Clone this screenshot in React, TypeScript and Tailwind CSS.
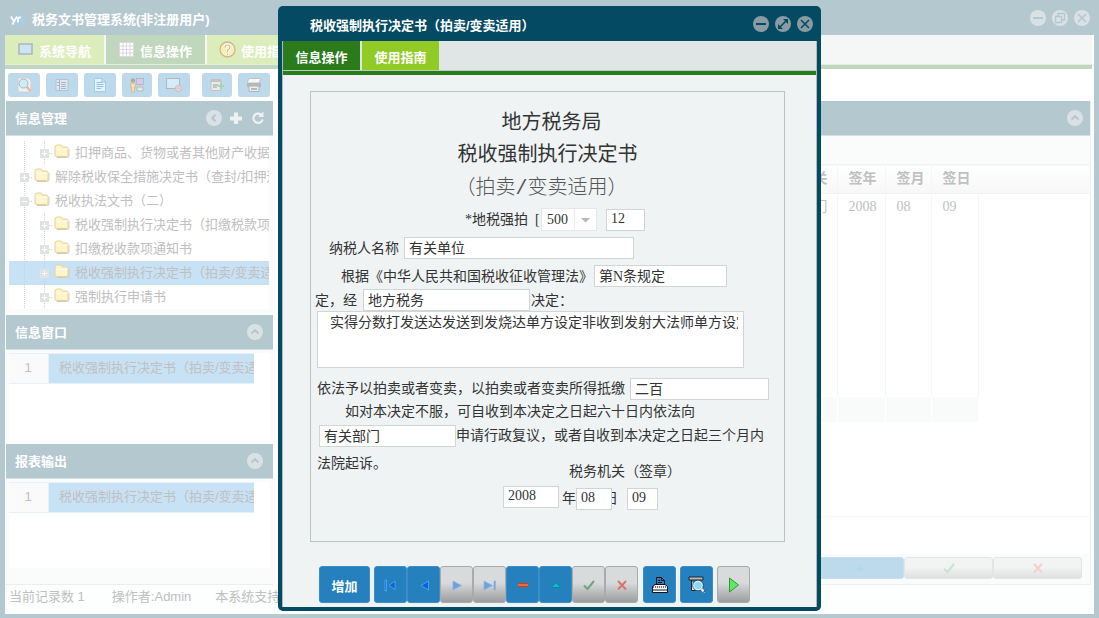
import { useState, type ReactNode } from 'react';
import clsx from 'clsx';

const treeRows = [
  { level: 2, text: '扣押商品、货物或者其他财产收据' },
  { level: 1, text: '解除税收保全措施决定书（查封/扣押适' },
  { level: 1, text: '税收执法文书（二）', open: true },
  { level: 2, text: '税收强制执行决定书（扣缴税款项' },
  { level: 2, text: '扣缴税收款项通知书' },
  { level: 2, text: '税收强制执行决定书（拍卖/变卖适', selected: true },
  { level: 2, text: '强制执行申请书' },
];

const folderPath = 'M1 4.5 Q1 2 3 2 H6.5 Q8 2 8.5 4 H12.5 Q14 4 14 5.5 V12 Q14 13.5 12.5 13.5 H3 Q1 13.5 1 12 Z';

function TreeLines({ level, open }: { level: number; open?: boolean }) {
  const x = level === 2 ? 35 : 15;
  return (
    <svg width={level === 2 ? 66 : 46} height="24" className="shrink-0" fill="none">
      <path d="M15.5 0V24" stroke="#d2d2d2" strokeDasharray="1 1" />
      {level === 2 && <path d="M35.5 0V24" stroke="#d2d2d2" strokeDasharray="1 1" />}
      <path d={`M${x + 5} 12.5H${x + 9}`} stroke="#d2d2d2" strokeDasharray="1 1" />
      <rect x={x - 4} y="8" width="9" height="9" fill="#e0e3e4" />
      <path d={`M${x - 2} 12.5h5${open ? '' : `M${x + 0.5} 10v5`}`} stroke="#fff" />
      <g transform={`translate(${x + 10} 2)`}>
        <path d={folderPath} fill="#fdf5cb" stroke="#e8d29c" />
        <path d="M3 6.5H13.5" stroke="#fffdf0" />
        <path d="M15 6V13.5Q14.5 14.5 12.5 14.5H3" stroke="#d3cbb8" />
      </g>
    </svg>
  );
}

function CircleButton({ label, dark, children }: { label: string; dark?: boolean; children: ReactNode }) {
  return (
    <button
      aria-label={label}
      className={clsx(
        'w-4 h-4 rounded-full flex items-center justify-center shrink-0',
        dark ? 'bg-[#8a9ca3] text-[#044a62]' : 'bg-[#dae1e4] text-[#b4c8d0]'
      )}
    >
      <svg width="16" height="16" viewBox="0 0 16 16" fill="none" stroke="currentColor" strokeWidth="1.6">
        {children}
      </svg>
    </button>
  );
}

function PanelHeader({ title, children }: { title?: string; children: ReactNode }) {
  return (
    <div className="h-[35px] shrink-0 bg-[#b4c8d0] border-b border-[#d5e0e5] flex items-center justify-between pl-[9px] pr-[7px]">
      <h2 className="text-white font-bold pt-px">{title}</h2>
      <div className="flex items-center gap-[7px]">{children}</div>
    </div>
  );
}

const upArrow = <path d="M4.5 9.5 8 6.2 11.5 9.5" strokeWidth="2" />;

function ListPanel({ title, className }: { title: string; className: string }) {
  return (
    <section className={clsx('flex flex-col', className)}>
      <PanelHeader title={title}>
        <span className="pr-[3px]">
          <CircleButton label="折叠">{upArrow}</CircleButton>
        </span>
      </PanelHeader>
      <div className="flex-1 mx-[3px] mt-[3px] mb-1 bg-white">
        <div className="flex h-[31px] mr-4 border-y border-[#e6f1fa]">
          <span className="w-10 pr-px text-center leading-[28px] bg-[#fafafa] border-r border-[#e6f1fa]">1</span>
          <span className="flex-1 bg-[#c8e2f5] pl-[10px] leading-[28px] whitespace-nowrap overflow-hidden">
            税收强制执行决定书（拍卖/变卖适
          </span>
        </div>
      </div>
    </section>
  );
}

const toolIcons = [
  {
    label: '查询',
    wide: true,
    icon: (
      <>
        <path d="M2 1H12L15 4V15H2Z" fill="#efefef" stroke="#cfd0d0" />
        <circle cx="7.5" cy="6.5" r="4.5" fill="#cdecfa" stroke="#a9b9c3" />
        <path d="M10.5 9.5 14.5 14" stroke="#e8b79f" strokeWidth="2.4" />
      </>
    ),
  },
  {
    label: '列表',
    wide: true,
    icon: (
      <>
        <path d="M2 2.5H14V13.5H2Z" fill="#dfe8ee" stroke="#b5c3ce" />
        <path d="M5.5 3V13M7 5.5H12M7 7.5H12M7 9.5H12M7 11.5H12M3 5.5H5M3 8.5H5" stroke="#a3b7c6" />
      </>
    ),
  },
  {
    label: '文档',
    wide: true,
    icon: (
      <>
        <path d="M2.5 1.5H10L13.5 5V14.5H2.5Z" fill="#e5f3fb" stroke="#a9cae0" />
        <path d="M10 1.5V5H13.5M4.5 5.5H10M4.5 7.5H11.5M4.5 9.5H11.5M4.5 11.5H9" stroke="#94bfdd" />
      </>
    ),
  },
  {
    label: '用户',
    wide: false,
    icon: (
      <>
        <rect x="7.5" y="1.5" width="7" height="6" fill="#d2caf6" stroke="#b5bac2" />
        <path d="M8 10H14V14H8Z" fill="#e6e6e6" stroke="#b5bac0" />
        <circle cx="4" cy="3.5" r="2.3" fill="#b5a89d" />
        <path d="M2 6H6L7 10H5.5V15H2.5V10H1.5Z" fill="#f6e0b0" stroke="#d6bb92" />
      </>
    ),
  },
  {
    label: '屏幕',
    wide: true,
    icon: (
      <>
        <rect x="0.5" y="1.5" width="13" height="10" fill="#d6ebf8" stroke="#b0b6bb" />
        <circle cx="12.5" cy="11.5" r="3.2" fill="#e3d0ee" stroke="#dfbba0" />
        <path d="M10.5 12.5 12.5 10.5 14.5 12.5" stroke="#a5dcb3" />
      </>
    ),
  },
  {
    label: '新增',
    wide: false,
    icon: (
      <>
        <path d="M2 2.5H12V13.5H2Z" fill="#ebebe6" stroke="#c4c4bf" />
        <path d="M2 4H12M4 8H9M4 10H8" stroke="#b5b9bc" strokeWidth="1.5" />
        <path d="M12 6V12M9 9H15" stroke="#a5d5ad" strokeWidth="2" />
      </>
    ),
  },
  {
    label: '打印',
    wide: true,
    icon: (
      <>
        <path d="M3 1.5H15L13 6H1Z" fill="#f7f7f7" stroke="#c2c2c2" />
        <path d="M1 6H15V10H1Z" fill="#b3b8bb" />
        <path d="M3 9H13V14.5H3Z" fill="#ececec" stroke="#aeb4b8" />
        <path d="M5 12H11" stroke="#a9a9a9" strokeWidth="1.5" />
      </>
    ),
  },
];

const navIcons = [
  { name: 'first', path: <><path d="M12 4 6 8.500 12 12.500Z" /><path d="M2 3h1.500v11H2z" /></> },
  { name: 'prior', path: <path d="M12.500 4 5 8.500 12.500 13Z" /> },
  { name: 'next', path: <path d="M4 4 12.500 8.500 4 13Z" /> },
  { name: 'last', path: <><path d="M2 4 10.500 8.500 2 13Z" /><path d="M12 4h1.500v9H12z" /></> },
];

function NavButton({ label, off, children }: { label: string; off?: boolean; children: ReactNode }) {
  return (
    <button
      aria-label={label}
      className={clsx(
        'w-[33px] h-[37px] rounded-[3px] border flex items-center justify-center',
        off
          ? 'border-[#a7abac] bg-linear-to-b from-[#d8dadb] from-45% to-[#9b9d9e]'
          : 'border-[#3b8ec7] bg-[#2680be]'
      )}
    >
      {children}
    </button>
  );
}

function Sidebar() {
  return (
    <aside className="w-[267px] shrink-0 flex flex-col text-[#c0c0c0] bg-[#fafcfb] border-b border-[#eceff0]">
      <PanelHeader title="信息管理">
        <CircleButton label="收起">
          <path d="M9.5 4.5 6.2 8 9.5 11.5" strokeWidth="2" />
        </CircleButton>
        <button aria-label="添加">
          <svg width="14" height="14" fill="none" stroke="#edf1f3" strokeWidth="4">
            <path d="M7 1.500V13M1 7.500H13" />
          </svg>
        </button>
        <button aria-label="刷新">
          <svg width="16" height="16" fill="none" stroke="#edf1f3" strokeWidth="2.2">
            <path d="M11 4.500A4.700 4.700 0 1 0 12.700 9.500" />
            <path d="M13.500 1.500V7H8Z" fill="#edf1f3" stroke="none" />
          </svg>
        </button>
      </PanelHeader>
      <ul className="ml-[3px] mr-1 mb-[6px] pt-[5px] bg-white">
        {treeRows.map((row) => (
          <li
            key={row.text}
            className={clsx('h-6 flex items-center overflow-hidden whitespace-nowrap', row.selected && 'bg-[#c8e2f5]')}
          >
            <TreeLines level={row.level} open={row.open} />
            {row.text}
          </li>
        ))}
      </ul>
      <ListPanel title="信息窗口" className="h-[129px]" />
      <ListPanel title="报表输出" className="flex-1 pb-3" />
    </aside>
  );
}

function RecordPanel() {
  const cell = 'border-r border-[#f5f6f6] pl-[11px] text-left';
  return (
    <main className="flex-1 min-w-0 ml-[6px] mr-px flex flex-col bg-[#fafcfb] border-b border-r border-[#eef1f1]">
      <PanelHeader>
        <CircleButton label="折叠">{upArrow}</CircleButton>
      </PanelHeader>
      <div className="flex-1 mt-7 mx-px bg-white font-['Liberation_Serif','Noto_Sans_CJK_SC',serif] text-sm text-[#c0c0c0]">
        <div className="h-[353px] border-b border-[#f4f5f5]">
          <table className="w-full table-fixed border-collapse">
            <thead>
              <tr className="h-[29px] bg-linear-to-b from-white to-[#f7f7f7] border-y border-[#f1f2f2]">
                <th className={clsx(cell, 'w-[480px]')}>纳税人名称</th>
                <th className={clsx(cell, 'w-[77px]')}>复议机关</th>
                <th className={clsx(cell, 'w-12')}>签年</th>
                <th className={clsx(cell, 'w-[46px]')}>签月</th>
                <th className="w-[47px] pl-[11px] text-left">签日</th>
                <th />
              </tr>
            </thead>
            <tbody>
              <tr className="h-[26px]">
                <td className={cell}>有关单位</td>
                <td className={cell}>有关部门</td>
                <td className={cell}>2008</td>
                <td className={cell}>08</td>
                <td className={cell}>09</td>
                <td />
              </tr>
              <tr className="h-[177px]">
                {[0, 1, 2, 3, 4].map((i) => (
                  <td key={i} className={cell} />
                ))}
                <td />
              </tr>
              <tr className="h-[25px]">
                {[0, 1, 2, 3, 4].map((i) => (
                  <td key={i} className="border-r border-white bg-[#f9fbfa]" />
                ))}
                <td />
              </tr>
            </tbody>
          </table>
        </div>
      </div>
      <div className="h-[30px] shrink-0 pt-[3px] pr-2 pl-[2px] flex">
        {[0, 1, 2, 3, 4, 5, 6, 7, 8].map((i) => (
          <button
            key={i}
            aria-label={`记录操作 ${i + 1}`}
            className={clsx(
              'flex-1 h-[22px] rounded-[3px] border flex items-center justify-center',
              i < 7 ? 'bg-[#bdd9ec] border-[#c6deee]' : 'border-[#e2e4e5] bg-linear-to-b from-[#f2f4f4] from-45% to-[#dfe1e1]'
            )}
          >
            <svg width="12" height="12" fill="none">
              {i === 6 && <path d="M2 8 6 4 10 8Z" fill="#a6dfe9" />}
              {i === 7 && <path d="M1 7 4.500 10 11 2" stroke="#cbdfd2" strokeWidth="2" />}
              {i === 8 && <path d="M2 2 10 10.500M10 2 2 10.500" stroke="#f3cfcd" strokeWidth="2" />}
            </svg>
          </button>
        ))}
      </div>
    </main>
  );
}

function Field({ label, value, className }: { label: string; value: string; className: string }) {
  return (
    <input
      aria-label={label}
      defaultValue={value}
      className={clsx('h-[22px] px-1 pb-[2px] bg-white border border-[#d2d5d6] text-[#333] outline-none', className)}
    />
  );
}

function DecisionForm() {
  return (
    <form className="flex-1 ml-[27px] mr-[31px] mt-4 pt-[14px] pl-1 border border-[#bcc3c6] whitespace-nowrap text-sm leading-[18px] text-[#333] font-['Liberation_Serif','Noto_Sans_CJK_SC',serif]">
      <h1 className="text-center text-[20px] leading-8 pl-1">地方税务局</h1>
      <h1 className="text-center text-[20px] leading-8 pr-1">税收强制执行决定书</h1>
      <p className="text-center text-[20px] leading-[38px] pr-4 font-light text-[#555] font-['Liberation_Mono','Noto_Sans_CJK_SC',monospace]">
        （拍卖/变卖适用）
      </p>
      <div className="flex items-center ml-[150px]">
        <span className="w-[76px]">*地税强拍&nbsp;&nbsp;[</span>
        <div className="relative w-14">
          <select
            aria-label="字号"
            defaultValue="500"
            className="appearance-none w-full h-[23px] pl-[5px] bg-white border border-[#e6e8e8] outline-none"
          >
            <option>500</option>
          </select>
          <svg width="22" height="21" className="absolute right-px top-px pointer-events-none">
            <path d="M0.500 0V21" stroke="#eceeee" />
            <path d="M7 9H16L11.500 13.500Z" fill="#b5b8b9" />
          </svg>
        </div>
        <Field label="编号" value="12" className="w-[39px] ml-[9px]" />
      </div>
      <div className="flex items-center mt-[6px] ml-[14px]">
        <label htmlFor="payer" className="w-[75px] pt-px">纳税人名称</label>
        <input
          id="payer"
          defaultValue="有关单位"
          className="w-[230px] h-[22px] px-1 pb-[2px] bg-white border border-[#d2d5d6] outline-none"
        />
      </div>
      <div className="flex items-center mt-[6px] ml-[26px]">
        <span className="w-[253px] pt-px">根据《中华人民共和国税收征收管理法》</span>
        <Field label="条款" value="第N条规定" className="w-[133px]" />
      </div>
      <div className="flex items-center mt-[2px]">
        <span className="w-12 pt-px">定，经</span>
        <Field label="批准机关" value="地方税务" className="w-[167px]" />
        <span className="ml-px pt-px">决定：</span>
      </div>
      <div className="ml-[2px] w-[427px] h-[57px] bg-white border border-[#d2d5d6] pl-3 pr-[5px]">
        <textarea
          aria-label="决定内容"
          wrap="off"
          defaultValue="实得分数打发送达发送到发烧达单方设定非收到发射大法师单方设定"
          className="block w-full h-full pt-[2px] resize-none overflow-hidden outline-none"
        />
      </div>
      <div className="flex items-center mt-[10px] ml-[2px]">
        <span className="w-[313px]">依法予以拍卖或者变卖，以拍卖或者变卖所得抵缴</span>
        <Field label="抵缴" value="二百" className="w-[139px]" />
      </div>
      <p className="ml-[30px] leading-6">如对本决定不服，可自收到本决定之日起六十日内依法向</p>
      <div className="flex items-center mt-px ml-1">
        <Field label="复议机关" value="有关部门" className="w-[137px]" />
        <span>申请行政复议，或者自收到本决定之日起三个月内</span>
      </div>
      <div className="flex h-[26px] mt-2 ml-[2px]">
        <span className="w-[252px]">法院起诉。</span>
        <span className="self-end">税务机关（签章）</span>
      </div>
      <div className="flex items-end h-6 mt-[5px] ml-[188px]">
        <Field label="签年" value="2008" className="w-14 self-start" />
        <span className="ml-[3px] mb-[2px]">年</span>
        <Field label="签月" value="08" className="w-9 relative z-10" />
        <span className="-ml-2 mb-[2px]">日</span>
        <Field label="签日" value="09" className="w-[31px] ml-[9px]" />
      </div>
    </form>
  );
}

function DialogFooter() {
  return (
    <div className="flex mt-6 mb-1 ml-9">
      <button className="w-[51px] h-[37px] pt-1 rounded-[3px] bg-[#2680be] border border-[#3b8ec7] text-white font-bold mr-1">
        增加
      </button>
      {navIcons.map((nav, i) => (
        <NavButton key={nav.name} label={nav.name} off={i > 1}>
          <svg width="16" height="16" fill={i > 1 ? '#6da4dc' : '#0a63dc'} stroke={i > 1 ? '#8db6e2' : '#5db4f7'} strokeWidth="0.7">
            {nav.path}
          </svg>
        </NavButton>
      ))}
      <NavButton label="删除">
        <svg width="12" height="6">
          <path d="M1 1H11V5H1Z" fill="#d93a16" />
          <path d="M1 3H11" stroke="#f7a452" />
        </svg>
      </NavButton>
      <NavButton label="编辑">
        <svg width="12" height="8">
          <path d="M1 6.500 6 1.500 11 6.500Z" fill="#13b8cf" stroke="#0b86a5" />
        </svg>
      </NavButton>
      <NavButton label="保存" off>
        <svg width="14" height="12" fill="none" stroke="#6fa583" strokeWidth="2">
          <path d="M2 6.500 5.500 10 12 2" />
        </svg>
      </NavButton>
      <NavButton label="取消" off>
        <svg width="12" height="12" fill="none" stroke="#d8746e" strokeWidth="2">
          <path d="M2 2 10 10.500M10 2 2 10.500" />
        </svg>
      </NavButton>
      <div className="flex gap-1 ml-[5px]">
        <NavButton label="打印">
          <svg width="18" height="18" fill="none" stroke="#111">
            <path d="M5.500 9V1.500H10.500L13.500 4.500V9" fill="#2680be" />
            <path d="M10.500 1.500V4.500H13.500M7 4.500H9M7 6.500H11" />
            <path d="M1.500 10.500 4 8.500H14L16.500 10.500V16.500H1.500Z" fill="#fff" />
            <path d="M2 11.500H16" stroke="#e0564b" strokeDasharray="1 1" />
            <path d="M2 10.500H16" stroke="#3b77c4" strokeDasharray="1 1" />
            <path d="M2 14H16" strokeWidth="1" />
          </svg>
        </NavButton>
        <NavButton label="预览">
          <svg width="18" height="18" fill="none">
            <path d="M1 1H15V4H1Z" fill="#b9bcc0" stroke="#1d2733" />
            <path d="M3.500 4V14.500H8" fill="#d8e8f3" stroke="#1d2733" />
            <circle cx="10" cy="9.500" r="4.500" fill="#8ed7f6" stroke="#e6f6fd" strokeWidth="1.500" />
            <circle cx="10" cy="9.500" r="5.300" stroke="#1a2c3c" strokeWidth="0.700" />
            <path d="M13.500 13 16.500 16.500" stroke="#efeff0" strokeWidth="2.200" />
            <path d="M15 16.500 17.500 14.500" stroke="#1d2733" />
          </svg>
        </NavButton>
        <NavButton label="运行" off>
          <svg width="14" height="18">
            <path d="M2.500 2 11.500 9 2.500 16Z" fill="#5fe864" stroke="#2e9837" />
          </svg>
        </NavButton>
      </div>
    </div>
  );
}

function DecisionDialog() {
  const [tab, setTab] = useState(0);
  return (
    <div
      role="dialog"
      aria-label="税收强制执行决定书"
      className="absolute inset-x-0 mx-auto top-[6px] bottom-[7px] w-[543px] z-20 rounded-[5px] bg-[#044a62] px-1 pb-1 flex flex-col"
    >
      <div className="h-[35px] shrink-0 flex items-center justify-between pl-7 pr-1">
        <h2 className="text-white font-bold pt-1">税收强制执行决定书（拍卖/变卖适用）</h2>
        <div className="flex gap-[6px]">
          <CircleButton label="最小化" dark>
            <path d="M3 8H13" strokeWidth="2" />
          </CircleButton>
          <CircleButton label="还原" dark>
            <path d="M5 11 11 5" />
            <path d="M8 3H13V8ZM3 8V13H8Z" fill="currentColor" stroke="none" />
          </CircleButton>
          <CircleButton label="关闭" dark>
            <path d="M4 4 12 12M12 4 4 12" />
          </CircleButton>
        </div>
      </div>
      <div className="flex-1 flex flex-col bg-[#eff3f4] border-x border-[#a9bcc4]">
        <div className="h-[30px] shrink-0 flex gap-[2px] bg-[#e0e5e5] border-b border-[#b7cdb5]">
          {['信息操作', '使用指南'].map((name, i) => (
            <button
              key={name}
              onClick={() => setTab(i)}
              className={clsx('w-[77px] pt-[4px] text-white font-bold', tab === i ? 'bg-[#2b7a1b]' : 'bg-[#91cb25]')}
            >
              {name}
            </button>
          ))}
        </div>
        <div className="h-1 shrink-0 bg-[#2b7a1b]" />
        <DecisionForm />
        <DialogFooter />
      </div>
    </div>
  );
}

export default function App() {
  return (
    <div className="relative h-screen flex flex-col overflow-hidden bg-[#b4c8d0] pb-1 text-[13px] font-['Liberation_Sans','Noto_Sans_CJK_SC',sans-serif]">
      <header className="h-[35px] shrink-0 flex items-center justify-between pl-[10px] pr-[9px]">
        <div className="flex items-center gap-[6px] pt-[4px]">
          <svg width="16" height="14">
            <path d="M4 12Q0 12 0.500 8Q1 5 4 5Q5 1 9 1.500Q12 2 12.500 5Q16 6 15.500 9Q15 12 12 12Z" fill="#a9cee4" />
            <path d="M1 3.500 4 8.500 7 3.500M4 8.500 2.500 11.500M8 9.500V6Q8.500 4 11 4.500" fill="none" stroke="#fff" strokeWidth="1.800" />
          </svg>
          <h1 className="text-white font-bold">税务文书管理系统(非注册用户)</h1>
        </div>
        <div className="flex gap-[6px]">
          <CircleButton label="最小化">
            <path d="M3 8H13" strokeWidth="2" />
          </CircleButton>
          <CircleButton label="还原">
            <path d="M3.500 6.500H9.500V12.500H3.500ZM6 6V3.500H12.500V10H10" strokeWidth="1.300" />
          </CircleButton>
          <CircleButton label="关闭">
            <path d="M4 4 12 12M12 4 4 12" />
          </CircleButton>
        </div>
      </header>

      <div className="flex-1 min-h-0 ml-[5px] mr-[5px] pr-[2px] bg-[#fdfefe] flex flex-col">
        <nav className="h-[30px] shrink-0 flex gap-[2px] bg-[#f5f7f7] border-b border-[#e3ece1]">
          <button className="w-[99px] bg-[#dcedbc] text-white font-bold flex items-center gap-[6px] pl-[13px]">
            <svg width="15" height="13">
              <rect x="1" y="1" width="13" height="10" fill="#cbe5f6" stroke="#adb5b9" strokeWidth="1.500" />
            </svg>
            <span className="pt-[4px]">系统导航</span>
          </button>
          <button className="w-[99px] bg-[#c1d7bd] text-white font-bold flex items-center gap-[6px] pl-[13px]">
            <svg width="15" height="15" stroke="#dcd7de">
              <rect x="0.500" y="0.500" width="14" height="14" fill="#fff" />
              <path d="M0 4H15M0 7.500H15M0 11H15M4 0V15M7.500 0V15M11 0V15" />
            </svg>
            <span className="pt-[4px]">信息操作</span>
          </button>
          <button className="w-[99px] bg-[#dcedbc] text-white font-bold flex items-center gap-[5px] pl-3">
            <svg width="17" height="17" fill="none">
              <circle cx="8.500" cy="8.500" r="7.500" fill="#fbefb4" stroke="#c9b797" strokeWidth="1.300" />
              <path d="M6 6.500Q6 4 8.500 4Q11 4 11 6.300Q11 8 8.500 9V11M8.500 12V14" stroke="#fff" strokeWidth="2.600" />
              <path d="M6 6.500Q6 4 8.500 4Q11 4 11 6.300Q11 8 8.500 9V11M8.500 12.500V14" stroke="#cbbd98" strokeWidth="1.200" />
            </svg>
            <span className="pt-[4px]">使用指南</span>
          </button>
        </nav>
        <div className="h-1 shrink-0 bg-[#c1d7bd]" />
        <div className="h-8 shrink-0 flex items-center gap-[6px] pl-[3px] bg-white">
          {toolIcons.map((tool) => (
            <button
              key={tool.label}
              aria-label={tool.label}
              className={clsx(
                'h-6 rounded-[3px] bg-[#bdd9ec] flex items-center justify-center',
                tool.wide ? 'w-8' : 'w-[30px]',
                tool.label === '新增' && 'ml-[6px]'
              )}
            >
              <svg width="16" height="16" fill="none">
                {tool.icon}
              </svg>
            </button>
          ))}
        </div>
        <div className="flex-1 min-h-0 flex pl-px">
          <Sidebar />
          <RecordPanel />
        </div>
        <footer className="h-[29px] shrink-0 flex gap-6 pl-1 pt-[2px] leading-[20px] text-[#c0c0c0] whitespace-nowrap">
          <span className="mr-[3px]">当前记录数 1</span>
          <span>操作者:Admin</span>
          <span>本系统支持</span>
        </footer>
      </div>

      <DecisionDialog />
    </div>
  );
}
